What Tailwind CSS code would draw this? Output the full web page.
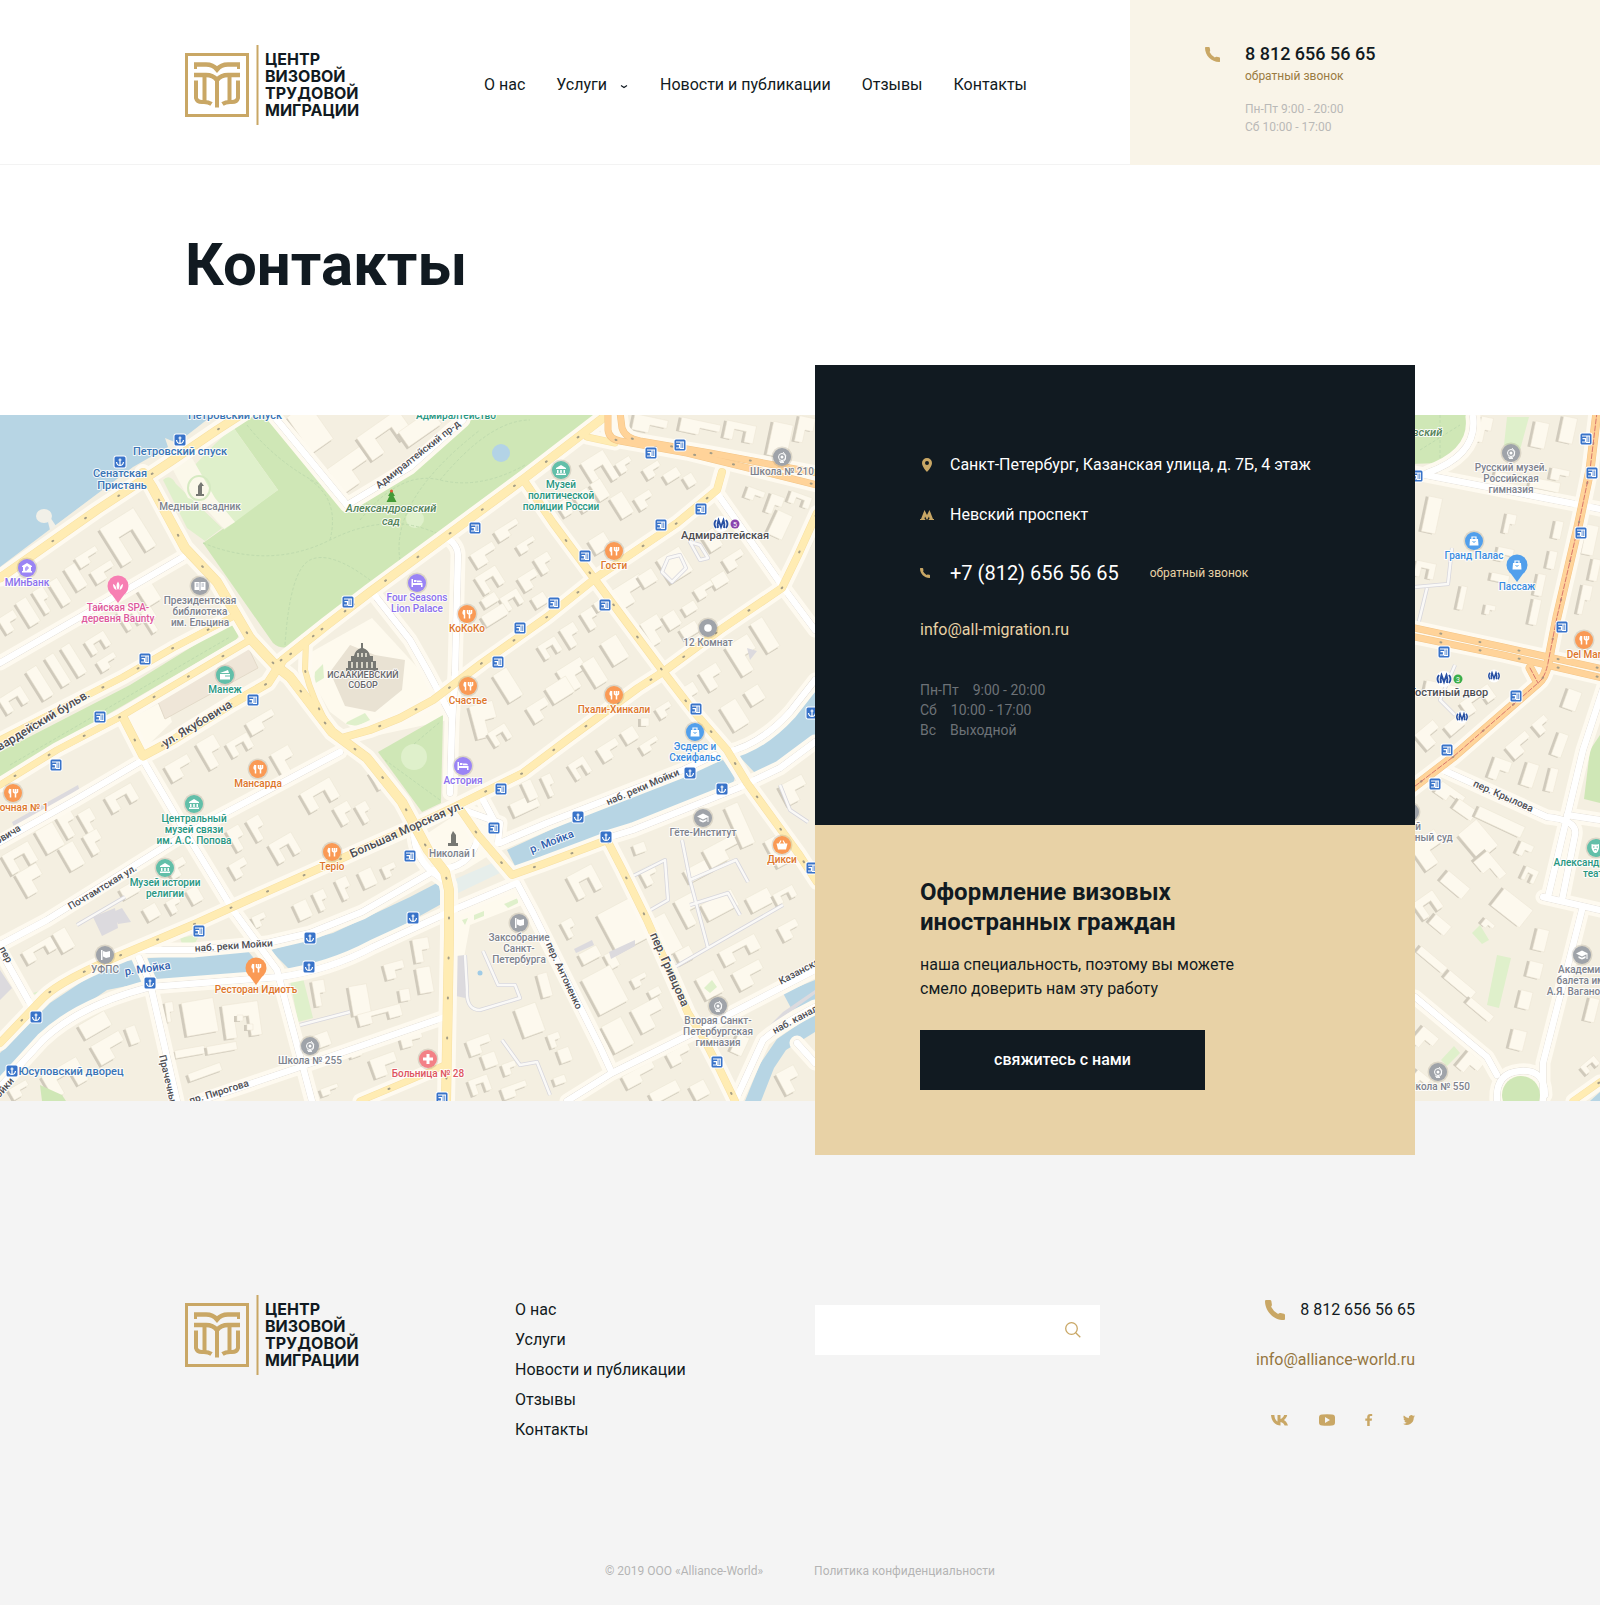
<!DOCTYPE html>
<html lang="ru">
<head>
<meta charset="utf-8">
<meta name="viewport" content="width=device-width, initial-scale=1">
<title>Контакты — Центр визовой трудовой миграции</title>
<script src="https://cdn.jsdelivr.net/npm/@tailwindcss/browser@4"></script>
</head>
<body class="bg-white font-['Roboto',sans-serif] text-base leading-6 text-[#111a21]">

<svg class="hidden" aria-hidden="true">
  <symbol id="logo" viewBox="0 0 74 80">
    <g fill="none" stroke="#c9a765">
      <rect x="1.5" y="9.500" width="61" height="61" stroke-width="3"/>
      <path d="M72.500 0V80" stroke-width="2"/>
      <path d="M9 19.500H21Q28 19.500 32 24.500Q36 19.500 43 19.500H55" stroke-width="4.500"/>
      <path d="M10.500 18V24M53.500 18V24" stroke-width="3"/>
      <path d="M9 30H21Q28 30 32 35Q36 30 43 30H55" stroke-width="4.500"/>
      <path d="M32 33V62.500M19.500 30V57M44.500 30V57" stroke-width="4"/>
      <path d="M11 35.500V53Q12 57 17 57Q23 56.500 26.500 59M53 35.500V53Q52 57 47 57Q41 56.500 37.500 59" stroke-width="4"/>
    </g>
  </symbol>
  <symbol id="phone" viewBox="0 0 18 18">
    <path fill="#c9a765" d="M1 0H4.500Q5.500 0 5.700 1L6.200 4Q6.400 5 5.500 6Q7.500 10.300 11.800 12.500Q12.800 11.600 14 11.800L17 12.300Q18 12.500 18 13.500V17Q18 18 17 18C7.600 18 0 10.400 0 1Q0 0 1 0Z"/>
  </symbol>
</svg>

<header class="flex h-[165px] border-b border-[#f3f3f3] pl-[calc(50%-615px)]">
  <a href="#" class="mt-[45px] flex h-20 w-[174px] shrink-0" aria-label="Центр визовой трудовой миграции">
    <svg class="h-20 w-[74px] shrink-0"><use href="#logo"/></svg>
    <span class="ml-1.5 mt-1.5 font-['Inter',sans-serif] text-base font-bold leading-[17px] whitespace-nowrap">ЦЕНТР<br>ВИЗОВОЙ<br>ТРУДОВОЙ<br>МИГРАЦИИ</span>
  </a>
  <nav class="ml-[125px] mt-[73px] flex h-6 gap-[31px] whitespace-nowrap">
    <a href="#">О нас</a>
    <a href="#" class="flex items-center gap-3">Услуги
      <svg class="mt-1 h-2 w-2.5" viewBox="0 0 10 8" fill="none" stroke="#111a21" stroke-width="1.200"><path d="M2 2.500L5 4.500L8 2.500"/></svg>
    </a>
    <a href="#">Новости и публикации</a>
    <a href="#">Отзывы</a>
    <a href="#">Контакты</a>
  </nav>
  <div class="-mb-px ml-auto flex w-[470px] gap-[25px] bg-[#f9f4e8] pl-[75px] pt-[42px]">
    <svg class="mt-[5px] h-[15px] w-[15px] shrink-0"><use href="#phone"/></svg>
    <div class="whitespace-nowrap text-xs leading-[18px] text-[#b9b9b7]">
      <a href="tel:88126565665" class="mb-px block text-lg font-medium leading-6 text-[#111a21]">8 812 656 56 65</a>
      <button type="button" class="mb-[15px] block text-[#9a7b42]">обратный звонок</button>
      <p>Пн-Пт 9:00 - 20:00</p>
      <p>Сб 10:00 - 17:00</p>
    </div>
  </div>
</header>

<main>
  <h1 class="mx-auto h-[200px] max-w-[1230px] pt-16 text-[60px] font-bold leading-[72px]">Контакты</h1>

  <section class="relative z-10 -mb-[54px] grid">
    <div class="col-start-1 row-start-1 mb-[54px] mt-[50px] min-h-0">
      <svg id="map" class="h-[686px] w-full bg-[#fdfaf0]" viewBox="0 415 1600 686" preserveAspectRatio="xMidYMid slice" role="img" aria-label="Карта проезда">
        <rect y="415" width="1600" height="686" fill="#f4efe1"/>
        <g id="buildings"></g>
        <!-- paler squares and courtyards -->
        <g fill="#fefaee">
          <path d="M306 655L372 618L452 705L448 720L365 738L330 712L306 670Z"/>
          <path d="M455 815L492 828L498 850L462 872L440 868L425 835Z"/>
          <path d="M455 910L515 885L522 905L470 925L458 990L452 990Z"/>
          <path d="M128 720L165 700L172 722L145 748Z"/>
        </g>
        <path d="M330 672L350 645L375 655L405 660L402 690L375 712L345 706Z" fill="#e9e2d3"/>
        <path d="M156 697L248 647L258 668L165 719Z" fill="#efe6d8" stroke="#e3dac9"/>
        <!-- water -->
        <g fill="#b7d5e4">
          <path d="M0 415H213L177 443L165 438L168 447L133 467L53 527L0 567Z"/>
          <path d="M507 850L600 807L723 760L735 777L733 784L607 836L517 870Z"/>
          <path d="M738 755L755 773L778 762L815 735V688L788 716Z"/>
          <path d="M0 1053L50 1003L110 963L150 958L247 950L262 968L265 974L147 982L107 990L63 1020L0 1083Z"/>
          <path d="M270 950L333 933L410 897L437 883L446 893L445 902L400 927L367 947L333 963L290 970Z"/>
          <path d="M815 1013L777 1039L760 1064L745 1101H761L774 1068L786 1050L815 1032Z"/>
          <path d="M783 993L815 980V1000L792 1010Z"/>
          <path d="M1590 1101L1600 1092V1101Z"/>
        </g>
        <path d="M453 880L497 861L502 872L456 894Z" fill="#e6eeeb"/>
        <g fill="#f1f0e8"><ellipse cx="44" cy="516" rx="8" ry="7"/><path d="M50 517L56 526L50 530L48 522Z"/></g>
        <!-- parks -->
        <g fill="#cfe7b6">
          <path d="M247 415H277L347 507L410 473L467 422L483 415H600L530 468L443 533L367 585L297 643Q283 652 273 643L203 543L278 490L233 427Z"/>
          <path d="M232 622Q242 626 240 634L236 640L0 777V752L130 685Z"/>
          <path d="M443 715L441 803L422 812L378 752Z"/>
          <path d="M1410 415H1466Q1470 458 1440 463L1410 464Z"/>
          <path d="M1590 750L1600 735V803L1584 799Z"/>
          <path d="M40 1085L62 1095L66 1101H42Z"/>
        </g>
        <g fill="#dff0cb">
          <path d="M233 427L278 490L224 530L190 470L215 444Z"/>
          <path d="M163 480Q170 473 176 484L222 528L205 541L187 528Z"/>
          <path d="M290 980L303 978L313 1018L298 1022Z"/>
          <path d="M180 938L200 934L195 943L182 944Z"/><path d="M33 993L50 988L38 997Z"/>
          <path d="M315 672L323 664L324 678L314 684Z"/><path d="M347 722L365 713L370 720L357 726L346 724Z"/>
          <circle cx="414" cy="757" r="13"/><circle cx="415" cy="519" r="9"/>
          <path d="M462 920L468 918L465 925ZM474 915L484 911V916L474 920ZM504 904L518 898V903L508 908ZM704 988L712 980L717 987L710 993Z"/>
          <path d="M1507 417H1529L1520 450L1504 445ZM1472 933L1480 925L1489 940L1482 944ZM1497 955L1511 958L1499 1008L1487 1005ZM1441 1060L1454 1046L1460 1053L1447 1066Z"/>
        </g>
        <path d="M172 468L192 458L215 498L235 522L224 529L200 502L188 498Z" fill="#fbf8ea"/>
        <ellipse cx="199" cy="488" rx="11" ry="12" fill="none" stroke="#d6eac2" stroke-width="2"/>
        <g fill="none" stroke="#bfdbae" stroke-dasharray="3 2">
          <path d="M203 543Q270 570 330 540T440 535M330 540Q340 500 310 480M247 425Q290 480 370 505M285 645Q290 570 310 560T370 580M360 520Q400 470 440 480T525 465M400 560Q390 500 480 430M440 480Q490 420 530 420"/>
          <path d="M10 765L230 637M385 760L440 800M414 744L440 722M1420 450L1460 425M1440 415V462"/>
        </g>
        <circle cx="501" cy="453" r="9" fill="#b3d3e6"/>
        <circle cx="480" cy="973" r="2.500" fill="#9fcbe6"/>
        <g fill="#dcdade">
          <path d="M12 822L78 785L80 792L15 829Z"/><path d="M93 917L115 908L118 928L102 936ZM113 912L122 908L131 922L118 924Z"/>
          <path d="M0 970L12 988L0 1000ZM456 956L465 955L465 998L456 996ZM574 949L592 940L594 945L576 953ZM609 952L635 940V946L611 959ZM747 648L757 651L750 660ZM783 1012L815 990L815 994L765 1030Z"/>
        </g>
        <!-- narrow courtyard lanes -->
        <g fill="none" stroke-linejoin="round">
          <g stroke="#d7d6dc" stroke-width="4"><path id="lanes" d="M483 951L498 985L515 985L520 998L480 1010Q466 1010 467 990L465 955M629 878L665 860L668 900L647 912M682 840L690 880L736 860L748 882M708 948L748 925L783 905M690 905L728 893L740 915M690 880L708 948L675 967M668 558L680 555L686 568L672 582L662 572ZM690 542L700 545L708 558L700 560ZM780 785L790 810L808 822M502 1040L520 1065L537 1062L550 1095M77 925L125 897M300 1025L350 1012M1415 587L1448 584L1452 548M1427 588L1418 625M1455 715L1440 700L1455 665M1560 830L1548 895"/></g>
          <use href="#lanes" stroke="#faf9f7" stroke-width="2.500"/>
        </g>
        <!-- streets: pale pavement, thin edge, white carriageway -->
        <g fill="none" stroke-linejoin="round" stroke-linecap="round">
          <g stroke="#fefaf0" stroke-width="15">
            <path id="m1" d="M273 415L347 505L410 467L463 420M447 538Q458 545 458 555L455 673L452 723L450 793M373 593L410 640L427 670L452 717M717 493L783 587L815 630M0 663L80 617L183 557M143 760L180 823L233 910L277 970L293 1030L312 1101M143 760L75 800L0 842M340 752L180 837L47 920L0 945M0 950L32 1007M137 950L193 950L267 943L310 933L362 912L430 873M0 1087L43 1040Q80 1005 150 987L280 977Q330 970 373 947L460 907L517 883L533 913L600 1047L612 1073L567 1101M500 843L547 823L683 770L715 755M607 838L633 830L738 788L780 768L815 742M727 752Q760 745 790 712L815 680M612 1073L693 1033L815 970M797 1043L815 1063M737 1097L763 1040Q780 1025 815 1007M150 983L167 1057L177 1101M200 1101L300 1067L445 1017M455 807L500 823L498 843M414 835Q415 855 430 870L450 885M483 800L498 828M433 870Q470 870 478 838M139 958L150 983"/>
            <path id="m2" d="M1473 417Q1478 455 1427 473M1410 472L1590 507L1610 511M1443 770L1547 817Q1578 820 1575 835L1562 900M1543 897L1600 910M1582 910L1543 1063V1101M1605 683L1583 750L1567 817L1548 897M1567 815L1600 820M1415 997L1487 1057L1497 1075M1497 1101Q1495 1073 1520 1071T1545 1095"/>
          </g>
          <g stroke="#e2ded8" stroke-width="7"><use href="#m1"/><use href="#m2"/></g>
          <g stroke="#fff" stroke-width="6"><use href="#m1"/><use href="#m2"/></g>
          <g id="yellow"></g>
        </g>
        <circle cx="1521" cy="1095" r="19" fill="#cfe7b6"/>
        <g id="labels" font-family="Roboto,sans-serif"></g>
      </svg>
    </div>

    <div class="col-start-1 row-start-1 mx-auto flex w-full max-w-[1230px] justify-end">
      <div class="w-[600px]">
        <address class="h-[460px] bg-[#111a21] pl-[105px] pt-[88px] not-italic text-white">
          <p class="flex h-6 items-center">
            <svg class="mr-4 h-3.5 w-3.5" viewBox="0 0 14 14"><path fill="#c9a765" fill-rule="evenodd" d="M7 0a5 5 0 0 0-5 5c0 3.700 5 9 5 9s5-5.300 5-9a5 5 0 0 0-5-5zm0 7a2 2 0 1 1 0-4 2 2 0 0 1 0 4z"/></svg>
            Санкт-Петербург, Казанская улица, д. 7Б, 4 этаж
          </p>
          <p class="mt-[26px] flex h-6 items-center">
            <svg class="mr-4 h-3.5 w-3.5" viewBox="0 0 14 14"><path fill="#c9a765" d="M4.500 2L7 7L9.500 2L13 11H14V12H8.700V11H9.500L9 8.500L7 12L5 8.500L4.500 11H5.300V12H0V11H1Z"/></svg>
            Невский проспект
          </p>
          <p class="mt-[34px] flex h-6 items-center">
            <svg class="mr-5 h-2.5 w-2.5"><use href="#phone"/></svg>
            <a href="tel:+78126565665" class="mr-[31px] text-xl leading-6">+7 (812) 656 56 65</a>
            <button type="button" class="text-xs leading-6 text-[#e8d2a6]">обратный звонок</button>
          </p>
          <a href="mailto:info@all-migration.ru" class="mt-[33px] block h-6 text-[#e8d2a6]">info@all-migration.ru</a>
          <div class="mt-[38px] text-sm leading-5 text-[#6d7277]">
            <p><span class="mr-3.5">Пн-Пт</span>9:00 - 20:00</p>
            <p><span class="mr-3.5">Сб</span>10:00 - 17:00</p>
            <p><span class="mr-3.5">Вс</span>Выходной</p>
          </div>
        </address>
        <div class="h-[330px] bg-[#e8d2a6] pl-[105px] pt-[52px]">
          <h2 class="text-2xl font-bold leading-[30px]">Оформление визовых<br>иностранных граждан</h2>
          <p class="mt-4">наша специальность, поэтому вы можете<br>смело доверить нам эту работу</p>
          <button type="button" class="mt-[29px] block h-[60px] w-[285px] bg-[#111a21] font-medium text-white">свяжитесь с нами</button>
        </div>
      </div>
    </div>
  </section>
</main>

<footer class="bg-[#f4f4f4] pt-[194px]">
  <div class="mx-auto flex h-[264px] max-w-[1230px]">
    <a href="#" class="flex h-20 w-[330px] shrink-0" aria-label="Центр визовой трудовой миграции">
      <svg class="h-20 w-[74px] shrink-0"><use href="#logo"/></svg>
      <span class="ml-1.5 mt-1.5 font-['Inter',sans-serif] text-base font-bold leading-[17px] whitespace-nowrap">ЦЕНТР<br>ВИЗОВОЙ<br>ТРУДОВОЙ<br>МИГРАЦИИ</span>
    </a>
    <nav class="flex w-[300px] flex-col items-start leading-[30px]">
      <a href="#">О нас</a>
      <a href="#">Услуги</a>
      <a href="#">Новости и публикации</a>
      <a href="#">Отзывы</a>
      <a href="#">Контакты</a>
    </nav>
    <form class="mt-2.5 flex h-[50px] w-[285px] bg-white">
      <input type="search" aria-label="Поиск по сайту" class="min-w-0 flex-1 pl-4 outline-none">
      <button type="submit" aria-label="Найти" class="grid w-[55px] place-items-center">
        <svg class="h-4 w-4" viewBox="0 0 16 16" fill="none" stroke="#c9a765" stroke-width="1.300"><circle cx="6.500" cy="6.500" r="5.800"/><path d="M10.700 10.700L15.300 15.300"/></svg>
      </button>
    </form>
    <div class="ml-auto flex flex-col items-end">
      <a href="tel:88126565665" class="flex h-[30px] items-center gap-[15px]"><svg class="h-5 w-5"><use href="#phone"/></svg>8 812 656 56 65</a>
      <a href="mailto:info@alliance-world.ru" class="mt-5 leading-[30px] text-[#957640]">info@alliance-world.ru</a>
      <div class="mt-[38px] flex h-3.5 items-center">
        <a href="#" aria-label="ВКонтакте" class="mr-[30px]"><svg class="h-3 w-[18px]" viewBox="0 0 18 12"><path fill="#c9a765" d="M9.800 11.500C4 11.500.5 7.300 0 1h3.400c.2 4.200 2 6 3.100 6.400V1h3v3.900C11 4.700 12.500 3 13.100 1h3.100c-.4 2.300-2.100 4.200-3.300 4.900 1.200.6 3.200 2.200 4.100 5.600h-3.400c-.6-1.800-2.100-3.300-4.100-3.500v3.500z"/></svg></a>
        <a href="#" aria-label="YouTube" class="mr-[30px]"><svg class="h-3 w-4" viewBox="0 0 16 12"><path fill="#c9a765" fill-rule="evenodd" d="M3 .5Q8 0 13 .5Q16 .7 16 3.500V8.500Q16 11.300 13 11.500Q8 12 3 11.500Q0 11.300 0 8.500V3.500Q0 .7 3 .5ZM6 3V9L11 6Z"/></svg></a>
        <a href="#" aria-label="Facebook" class="mr-[30px]"><svg class="h-3 w-2" viewBox="0 0 8 12"><path fill="#c9a765" d="M2.200 12V6.700H.3V4.500h1.900V3C2.200 1 3.400 0 5.200 0h2v2H6C5 2 4.700 2.500 4.700 3.200v1.300H7L6.700 6.700h-2V12z"/></svg></a>
        <a href="#" aria-label="Twitter"><svg class="h-3 w-3" viewBox="0 0 24 24"><path fill="#c9a765" d="M24 4.600a10 10 0 0 1-2.800.8 5 5 0 0 0 2.100-2.700 10 10 0 0 1-3.100 1.200 4.900 4.900 0 0 0-8.400 4.500A14 14 0 0 1 1.700 3.200a4.900 4.900 0 0 0 1.500 6.500 5 5 0 0 1-2.200-.6v.1a4.900 4.900 0 0 0 3.900 4.800 5 5 0 0 1-2.200.1 4.900 4.900 0 0 0 4.600 3.400A9.900 9.900 0 0 1 0 19.500 14 14 0 0 0 21.500 7.100 10 10 0 0 0 24 4.600z"/></svg></a>
      </div>
    </div>
  </div>
  <div class="flex h-[46px] justify-center gap-[51px] text-xs leading-6 text-[#b4b4b4]">
    <p>© 2019 ООО «Alliance-World»</p>
    <a href="#">Политика конфиденциальности</a>
  </div>
</footer>

<script>
const $ = id => document.getElementById(id);

// Carriageways: [path, width]
const streets = [
  ['M245 412L217 430L170 462L97 510L0 578', 8],
  ['M143 473L152 487L185 548L217 582L250 638L275 665L290 677L332 732L367 758L402 802L428 850L445 872L449 890V935L448 992L446 1101', 9],
  ['M458 806L478 835L512 875L543 864L586 848L607 840L622 869L647 920L688 1013L703 1037L720 1070L735 1101', 7],
  ['M0 1043L43 998Q60 980 133 950L197 923L248 900L300 877L410 828L458 805L523 773L567 740L638 688L663 672L720 630L782 588L798 555L817 513', 7],
  ['M603 418L525 478L445 537L400 570L370 592L327 625L283 660L268 683L233 703L173 740L143 756L123 717', 8],
  ['M370 592L327 625Q290 655 278 662M306 640L305 670Q312 700 332 732', 5],
  ['M236 615L173 648L123 677L33 723L0 740M250 640L120 717L57 750L0 785', 6],
  ['M722 472L717 490L677 523L597 577L547 617L482 663L433 700L400 718L370 730L345 737', 7],
  ['M525 482L553 523L593 577L627 623L662 670L695 713L727 750L747 783L798 853L817 882', 7],
  ['M360 1101L410 1080L445 1065M587 437L615 443M1573 1101L1600 1082', 6]
];
const avenues = [
  ['M608 412V430Q609 439 620 441L687 453L817 485', 6], ['M620 412L622 428Q625 438 640 441L710 453L817 473', 6],
  ['M1410 627L1503 647L1603 669', 6], ['M1410 636L1503 655L1603 678', 6],
  ['M1597 412L1590 470L1578 527L1557 617L1548 663Q1545 678 1538 683L1453 757L1410 790M1530 668L1538 683', 8]
];
const line = (d, c, w, x = '') => `<path d="${d}" stroke="${c}" stroke-width="${w}" ${x}/>`;
$('yellow').innerHTML =
  [...streets, ...avenues].map(s => line(s[0], '#fefaf0', s[1] + 9)).join('') +
  '<g stroke="#fff" stroke-width="6"><use href="#m1"/><use href="#m2"/></g>' +
  streets.map(s => line(s[0], '#f7e0a4', s[1] + 1)).join('') +
  streets.map(s => line(s[0], '#ffecb3', s[1])).join('') +
  avenues.map(s => line(s[0], '#f3c588', s[1] + 1)).join('') +
  avenues.map(s => line(s[0], '#ffd399', s[1])).join('') +
  [...streets, ...avenues].map(s => line(s[0], '#a39c86', 2, 'stroke-dasharray="1 39" stroke-dashoffset="9"')).join('') +
  line(avenues[4][0], '#d9776c', 1, 'stroke-dasharray="5 2"');

// Buildings: "centre-x centre-y width height angle shape"; shape 0 block, 1 L, 2 U
const blocks = `128 537 40 44 -32 2|88 557 24 12 -32 1|104 572 24 14 -32 1|76 577 12 26 -32 0|60 592 10 28 -32 0|44 600 12 26 -32 1|28 612 12 28 -32 0|10 622 18 18 -32 1
|148 592 16 26 -32 0|130 617 18 22 -32 2|152 620 12 24 -32 1|98 643 22 16 -32 2|108 662 20 12 -32 1|74 660 10 34 -32 0|58 670 10 34 -32 0|40 683 12 34 -32 0|14 700 26 18 -32 2
|310 428 26 44 -35 0|352 470 40 30 -35 1|385 435 50 28 -35 2|420 428 40 18 -35 0
|180 768 26 18 -30 1|212 752 20 30 -30 1|240 745 24 16 -30 2|285 760 20 24 -30 1|262 722 30 14 -30 1
|122 798 30 18 -30 2|68 822 16 30 -30 1|90 822 14 26 -30 1|50 838 20 26 -30 0|20 858 30 22 -30 2|32 880 24 26 -30 1|72 856 16 26 -30 0|95 842 16 22 -30 1
|320 795 34 22 -30 2|345 813 16 20 -30 1|365 812 12 20 -30 1|238 838 14 24 -30 1|258 828 14 24 -30 1|285 848 26 22 -30 2|240 868 18 16 -30 1|380 778 14 20 -30 0
|178 868 20 16 -30 1|195 895 12 16 -30 0|152 912 14 14 -30 0|175 905 14 14 -30 1|130 890 18 12 -30 0
|303 910 14 18 -25 0|322 900 12 20 -25 1|345 888 12 22 -25 1|368 878 14 18 -25 0|260 920 14 12 -25 1|390 870 14 12 -25 1
|40 950 34 14 -30 2|64 940 14 22 -30 0|95 1025 30 16 -30 0|110 1048 32 22 -30 1|65 1078 40 26 -30 2|133 1035 10 18 -20 0|20 1090 20 12 -30 1
|200 1017 32 34 -10 0|242 1020 36 34 -8 2|240 1018 6 6 0 0|250 1027 6 6 0 0|170 1012 8 20 -8 1|190 1052 30 8 -10 0|222 1048 30 8 -10 0|205 1072 34 8 -20 0
|320 993 12 26 -10 1|360 1000 18 30 -10 0|380 1015 44 12 -15 2|395 970 20 16 -15 1|322 1040 16 14 -20 0|385 1065 26 20 -20 1|355 1050 12 14 -20 0|330 1090 18 8 -20 1
|422 950 16 24 -10 1|425 980 14 26 -10 0|405 995 10 12 -10 0|412 1040 22 12 -15 1
|485 555 26 16 -32 1|508 530 26 12 -32 1|490 580 24 20 -32 2|512 600 20 16 -32 2|530 580 20 16 -32 1|545 563 16 18 -32 1|527 545 20 10 -32 1|495 615 26 12 -32 0|540 600 14 12 -32 0|490 600 16 10 -32 0
|600 470 26 32 -32 2|625 465 16 12 -32 1|653 470 18 12 -32 1|672 475 16 10 -32 0|585 500 16 20 -32 0|600 490 12 20 -32 0|622 505 14 24 -32 0|645 500 18 14 -32 1|565 508 10 16 -32 0|600 543 18 16 -32 0|690 480 10 12 -32 0
|630 592 34 22 -32 1|648 578 16 14 -32 0|655 630 20 26 -32 1|672 620 14 16 -32 0|690 630 18 12 -32 0|712 540 14 20 -32 0|735 560 22 14 -32 1|720 580 16 12 -32 0|675 565 26 28 -32 0|705 590 20 12 -32 1|690 608 14 10 -32 0
|550 648 20 16 -32 2|572 635 16 22 -32 1|592 618 16 20 -32 1|600 605 10 10 -32 0|615 650 18 26 -32 0|575 675 28 26 -32 1|595 672 14 28 -32 0|508 685 16 32 -32 0|560 690 24 18 -32 0|540 710 22 18 -32 1|485 720 24 34 -15 1|500 735 20 16 -32 2
|745 655 26 34 -32 1|765 635 14 34 -32 0|713 677 20 22 -32 1|690 690 14 12 -32 0|735 715 18 28 -32 0|755 695 16 16 -32 0|665 710 16 12 -32 1|610 750 22 16 -32 1|630 735 14 14 -32 0|580 768 18 18 -32 2|550 785 10 22 -25 1|525 805 28 14 -25 0|650 745 20 10 -32 1|530 790 10 20 -25 0|645 722 8 8 0 0
|650 425 34 16 12 1|700 428 40 14 12 1|740 432 30 18 12 2|780 440 20 34 12 0|805 430 16 26 12 1|755 495 18 12 20 1|775 505 14 20 20 1|800 500 22 12 20 2|780 525 16 26 25 0|805 545 12 20 25 1
|585 882 28 26 -28 2|570 928 12 18 -28 1|590 955 20 12 -28 0|612 960 10 16 -28 0|625 925 40 44 -28 0|605 990 32 40 -28 0|640 980 16 10 -28 1|650 1015 30 26 -28 1|618 1035 22 30 -28 0|655 992 12 8 -28 0
|530 1020 22 30 -20 0|545 985 10 24 -15 0|555 1040 12 14 -20 1|565 1055 12 14 -20 0|480 1045 24 16 -20 1|510 1068 14 12 -20 1|480 1085 20 16 -20 2|515 1090 26 12 -20 1|490 1060 14 14 -20 0|560 1080 12 8 -20 0
|640 848 12 10 -20 0|650 875 16 18 -28 1|665 935 20 40 -28 0|685 955 16 14 -28 0|700 870 30 14 -28 0|720 905 34 18 -28 0|740 950 40 16 -28 2|750 975 30 20 -28 1|690 910 20 30 -28 1|760 900 24 16 -28 0|785 895 22 12 -28 2|790 930 20 16 -28 1|710 985 20 24 -28 0|725 850 40 20 -28 1
|740 825 14 44 -24 0|795 790 26 22 -28 1|780 850 20 30 -28 0|640 1075 34 14 -28 1|680 1055 24 14 -28 1|665 1092 30 12 -28 0|700 1090 16 16 -28 0|740 1045 12 20 25 0|790 1080 20 24 -28 1
|1432 515 14 36 12 0|1510 524 10 20 12 1|1558 530 8 18 12 0|1552 560 8 18 12 0|1425 570 20 16 12 2|1462 598 6 24 12 0|1490 610 10 10 12 1|1540 585 8 22 12 0|1535 612 8 26 12 0|1505 555 16 14 12 1|1500 578 18 8 12 0
|1540 435 14 26 12 0|1568 430 14 26 12 0|1560 475 18 12 12 1|1485 430 12 26 12 1|1545 485 30 10 12 0|1500 480 12 16 12 0|1590 540 12 30 12 0|1585 600 10 30 12 1|1595 570 8 22 12 0
|1440 690 30 14 12 1|1478 700 34 16 -35 2|1430 735 24 20 -40 1|1455 725 20 12 -40 0|1520 745 26 16 -40 1|1542 725 16 14 -40 1|1560 745 10 24 20 0|1500 770 18 22 20 1|1530 775 12 24 18 0|1552 780 8 24 14 0|1572 700 14 20 20 0
|1450 795 28 14 35 1|1465 810 22 12 35 0|1500 822 50 12 25 0|1478 840 24 34 -40 0|1490 868 30 18 50 1|1430 850 30 30 -35 1|1455 885 28 14 40 0|1428 905 24 20 -35 2|1440 925 20 12 40 0|1525 850 14 14 25 1|1530 875 14 14 25 2|1512 908 36 22 38 0|1488 925 12 8 40 1
|1541 940 12 22 14 0|1535 970 14 16 14 0|1525 1000 12 18 14 0|1518 1040 14 20 14 0|1432 960 34 8 40 0|1460 985 34 10 40 0|1480 1010 30 8 40 0|1425 1040 20 20 40 1|1470 1065 20 20 40 1|1592 1010 10 24 14 0|1590 1065 18 10 -40 2|1420 1080 16 14 40 1`;
$('buildings').innerHTML = blocks.replace(/\n/g, '').split('|').map(b => {
  const [x, y, w, h, a, s] = b.trim().split(' ').map(Number), l = -w / 2, t = -h / 2, r = w / 2, m = h / 2;
  const d = s === 0 ? `M${l} ${t}H${r}V${m}H${l}Z`
    : s === 1 ? `M${l} ${t}H${r}V${t + h * .5}H${l + w * .5}V${m}H${l}Z`
    : `M${l} ${t}H${r}V${m}H${r - w * .3}V${t + h * .4}H${l + w * .3}V${m}H${l}Z`;
  return `<g transform="translate(${x} ${y}) rotate(${a})"><path d="${d}" fill="#d0cabc" transform="translate(-3 1)"/><path d="${d}" fill="#fdf9ee" stroke="#ece5d4" stroke-width=".5"/></g>`;
}).join('');

// Transit stops and piers
const bus = [[145,659],[100,717],[253,700],[348,602],[475,528],[651,453],[680,445],[701,509],[661,525],[585,556],[554,603],[605,605],[520,628],[498,662],[696,709],[56,765],[199,931],[501,789],[494,828],[410,856],[812,868],[717,1062],[442,1098],[1417,476],[1586,439],[1592,473],[1581,533],[1562,627],[1444,652],[1516,696],[1447,750],[1435,784]];
const piers = [[180,440],[120,462],[812,713],[310,938],[309,967],[150,983],[36,1017],[12,1071],[690,773],[722,789],[578,817],[606,837],[413,918]];
const badge = (x, y, inner) => `<g transform="translate(${x} ${y})"><rect x="-6.500" y="-6.500" width="13" height="13" rx="2.500" fill="#fff"/><rect x="-5.500" y="-5.500" width="11" height="11" rx="1.500" fill="#3873c9"/><g fill="none" stroke="#fff" stroke-width="1.200">${inner}</g></g>`;
let out = bus.map(p => badge(p[0], p[1], '<path d="M-4-3H4M1-3V3.500M3.200-3V3.500M0 3.500H4M-3.500-.3H-.5V3H-4"/>')).join('') +
  piers.map(p => badge(p[0], p[1], '<path d="M0-3.500V3.500M-3.500 0Q-3 3.500 0 3.500T3.500 0M-1.500-2H1.500"/>')).join('');

// Places: x, y, icon, circle colour, label colour, pin?, label lines
const glyphs = {
  food: '<path d="M-3-4Q-5 0-2.500.5V4.500M-2.500-4V4M2.500-4V4.500M.5-4V-1Q2.500 1 4.500-1V-4" fill="none" stroke="#fff" stroke-width="1.500"/>',
  museum: '<path d="M-5-2L0-5L5-2V-1H-5ZM-4 0H-2.500V3H-4ZM-.8 0H.8V3H-.8ZM2.500 0H4V3H2.500ZM-5 3.500H5V5H-5Z"/>',
  bed: '<path d="M-5.500-4H-4V0H5.500V4H4V2H-4V4H-5.500ZM-3-3H-.5V-1H-3ZM0-2.500H3Q5-2.500 5-.7H0Z"/>',
  shop: '<path d="M-4-2H4L4.500 4.500H-4.500Z"/><path d="M-2-2V-4H2V-2" fill="none" stroke="#fff" stroke-width="1.200"/><path d="M-1.500.5Q0 2 1.500.5" fill="none" stroke="#4a9eea"/>',
  school: '<circle r="3.500" fill="none" stroke="#fff"/><circle r="1.500"/><path d="M1-5Q5-2 3.500 2T-3 4M0 5H0V3M-2 5.500H2" fill="none" stroke="#fff" stroke-width=".9"/>',
  flag: '<path d="M-4-5H-2.500V5H-4ZM-2-4L1-3L5-4V2L1 3L-2 1.500Z"/>',
  book: '<path d="M-5.500-4H-1L0-3L1-4H5.500V4H1L0 5L-1 4H-5.500Z"/><path d="M0-3V4M-4-2H-1.500M-4 0H-1.500M4-2H1.500M4 0H1.500" stroke="#8e95a3" stroke-width=".8"/>',
  cap: '<path d="M-6-1.500L0-4.500L6-1.500L0 1.500ZM-3.500 1L0 2.700L3.500 1V3L0 4.500L-3.500 3ZM4.500-1H5.500V4H4.500Z"/>',
  basket: '<path d="M-5.500-1.500H5.500L4 4.500H-4Z"/><path d="M-3-1L-1-4.500M3-1L1-4.500" stroke="#fff" stroke-width="1.200"/>',
  cross: '<path d="M-1.500-5H1.500V-1.500H5V1.500H1.500V5H-1.500V1.500H-5V-1.500H-1.500Z"/>',
  dot: '<circle r="3.800"/>',
  bank: '<path d="M-5-2L0-5L5-2V-1H4V3H5V4.500H-5V3H-4V-1H-5Z"/><path d="M-1 3V-1H1V1H-2" fill="none" stroke="#9a84f5"/>',
  lotus: '<path d="M0-4.500Q3 0 0 4Q-3 0 0-4.500ZM-5-2Q-2-1-1.500 4Q-5 3-5-2ZM5-2Q2-1 1.500 4Q5 3 5-2Z"/>',
  wallet: '<path d="M-5-1H5V4.500H-5ZM-5-2L3-5L4-2Z"/><path d="M0 1H5" stroke="#5dbba5"/>',
  mask: '<path d="M-4.500-4Q0-3 3-4V0Q2 5-.5 5T-4.500 0Z"/><path d="M-3-1H-1.500M.5-1H2M-2 2Q-.5 1 1 2" stroke="#5dbba5" fill="none"/>'
};
const O = '#fa9a55', OL = '#dd7529', G = '#62bfa9', GL = '#269681', R = '#9fa3a9', RL = '#7d828d', V = '#9a84f5', VL = '#8b70ee', B = '#519fec', BL = '#388be0';
const places = [
  [27,568,'bank',V,VL,0,'МИнБанк'],[118,586,'lotus','#f77fb3','#de589c',1,'Тайская SPA-','деревня Baunty'],[200,586,'book',R,RL,0,'Президентская','библиотека','им. Ельцина'],
  [225,675,'wallet',G,GL,0,'Манеж'],[417,583,'bed',V,VL,0,'Four Seasons','Lion Palace'],[561,470,'museum',G,GL,0,'Музей','политической','полиции России'],
  [782,457,'school',R,RL,0,'Школа № 210'],[614,551,'food',O,OL,0,'Гости'],[467,614,'food',O,OL,0,'КоКоКо'],[468,686,'food',O,OL,0,'Счастье'],
  [614,695,'food',O,OL,0,'Пхали-Хинкали'],[708,628,'dot',R,RL,0,'12 Комнат'],[695,732,'shop',B,BL,0,'Эсдерс и','Схейфальс'],[463,766,'bed',V,VL,0,'Астория'],
  [258,769,'food',O,OL,0,'Мансарда'],[13,793,'food',O,OL,0,'Рюмочная № 1'],[194,804,'museum',G,GL,0,'Центральный','музей связи','им. А.С. Попова'],
  [165,868,'museum',G,GL,0,'Музей истории','религии'],[332,852,'food',O,OL,0,'Теріо'],[105,955,'flag',R,RL,0,'УФПС'],[256,968,'food',O,OL,1,'Ресторан Идиотъ'],
  [310,1046,'school',R,RL,0,'Школа № 255'],[428,1059,'cross','#f38186','#dd5460',0,'Больница № 28'],[519,923,'flag',R,RL,0,'Заксобрание','Санкт-','Петербурга'],
  [703,818,'cap',R,RL,0,'Гёте-Институт'],[782,845,'basket',O,OL,0,'Дикси'],[718,1006,'school',R,RL,0,'Вторая Санкт-','Петербургская','гимназия'],
  [1511,453,'school',R,RL,0,'Русский музей.','Российская','гимназия'],[1474,541,'shop',B,BL,0,'Гранд Палас'],[1517,565,'shop',B,BL,1,'Пассаж'],
  [1584,640,'food',O,OL,0,'Del Mar'],[1596,848,'mask',G,GL,0,'Александринский','театр'],[1582,955,'cap',R,RL,0,'Академия','балета им.','А.Я. Вагановой'],[1438,1072,'school',R,RL,0,'Школа № 550'],
  [1410,812,'dot',R,RL,0,'ский','Арбитражный суд']
];
const text = (x, y, s, c, size, extra = '') => `<text x="${x}" y="${y}" fill="${c}" font-size="${size}" font-weight="500" text-anchor="middle" stroke="#fff" stroke-opacity=".85" stroke-width="2" stroke-linejoin="round" paint-order="stroke" ${extra}>${s}</text>`;
for (const [x, y, icon, c, lc, pin, ...lines] of places) {
  const r = pin ? 10.5 : 9;
  out += `<g transform="translate(${x} ${y})">${pin ? `<path d="M-8 6L0 17L8 6Z" fill="${c}"/>` : `<circle r="10.500" fill="#6d6655" opacity=".18"/>`}<circle r="${r}" fill="${c}"/><g fill="#fff">${glyphs[icon]}</g></g>`;
  lines.forEach((s, i) => out += text(x, y + (pin ? 25 : 18) + i * 11, s, lc, 10));
}

// Landmarks
out += '<g fill="#777873"><path d="M196 496H204V494H202V486H204L201 482L198 486V494H196ZM448 846H458V843H456V835L453 831L451 835V843H448ZM346 671H378V668H376V661H373V656H370Q369 650 363 648V643H361V648Q355 650 354 656H351V661H348V668H346Z"/><path d="M352 668V662M357 668V662M362 668V662M367 668V662M372 668V662M358 657V653M362 657V653M366 657V653" stroke="#f4efe1" stroke-width="1.500"/></g>' +
  '<path d="M391.500 490L395 496H393.500L396.500 502H386.500L389.500 496H388Z" fill="#449b37"/><circle cx="391.500" cy="491" r="1.500" fill="#e65a35"/>';

// Metro
const metro = (x, y, s) => `<g transform="translate(${x} ${y}) scale(${s})"><circle r="8" fill="#fff"/><path d="M-5-4Q-8 0-5 4M5-4Q8 0 5 4M-3 4Q-4 0-2.500-4L0 3L2.500-4Q4 0 3 4" fill="none" stroke="#264fa3" stroke-width="1.900"/></g>`;
out += metro(721,524,1) + metro(1444,679,1) + metro(1494,676,.8) + metro(1462,717,.8) +
  '<circle cx="735" cy="524" r="4.500" fill="#8b43ad"/><circle cx="1458" cy="679" r="4.500" fill="#3bae49"/>' +
  '<g fill="#fff" font-size="7" text-anchor="middle"><text x="735" y="527">5</text><text x="1458" y="682">3</text></g>';

// Street, water and district names: x, y, text, colour, size, angle
const D = '#4d4d52', W = '#3974b5';
[[235,419,'Петровский спуск',W,11,0],[180,455,'Петровский спуск',W,11,0],[120,477,'Сенатская',W,11,0],[122,489,'Пристань',W,11,0],[71,1075,'Юсуповский дворец',W,11,0],
 [456,419,'Адмиралтейство',GL,10,0],[200,510,'Медный всадник',RL,10,0],[363,678,'ИСААКИЕВСКИЙ','#67676b',9,0],[363,688,'СОБОР','#67676b',9,0],[452,857,'Николай I',RL,10,0],
 [725,539,'Адмиралтейская',D,11,0],[1449,696,'Гостиный двор',D,11,0],[420,457,'Адмиралтейский пр-д',D,10,-38],[28,734,'Конногвардейский бульв.',D,12,-31],[199,727,'ул. Якубовича',D,12,-31],
 [408,833,'Большая Морская ул.',D,12,-24],[104,890,'Почтамтская ул.',D,10,-31],[234,949,'наб. реки Мойки',D,10,-4],[644,790,'наб. реки Мойки',D,10,-23],
 [553,845,'р. Мойка','#315fae',11,-21],[148,972,'р. Мойка','#315fae',11,-8],[561,977,'пер. Антоненко',D,10,65],[666,971,'пер. Гривцова',D,12,66],[165,1082,'Прачечный',D,10,77],
 [220,1095,'пр. Пирогова',D,10,-17],[803,973,'Казанская',D,10,-28],[799,1021,'наб. канала',D,10,-28],[1502,799,'пер. Крылова',D,10,24],[0,843,'Якубовича',D,10,-31],[3,956,'пер',D,10,62],[4,1093,'Мойки',D,10,-48]
].forEach(([x, y, s, c, size, a]) => out += text(x, y, s, c, size, `transform="rotate(${a} ${x} ${y})"`));
[[391,512,'Александровский'],[391,525,'сад'],[1405,436,'Михайловский']].forEach(([x, y, s]) => out += text(x, y, s, '#54825a', 11, 'font-style="italic"'));
$('labels').innerHTML = out;
</script>
</body>
</html>
